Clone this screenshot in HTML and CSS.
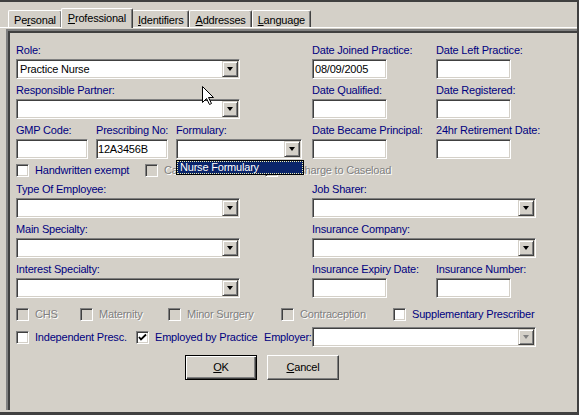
FILE: index.html
```html
<!DOCTYPE html>
<html>
<head>
<meta charset="utf-8">
<link rel="stylesheet" href="styles.css">
</head>
<body>
<div class="window">
  <div class="tabs">
    <div class="tab">Pe<u>r</u>sonal</div>
    <div class="tab selected"><u>P</u>rofessional</div>
    <div class="tab"><u>I</u>dentifiers</div>
    <div class="tab"><u>A</u>ddresses</div>
    <div class="tab"><u>L</u>anguage</div>
  </div>
  <div class="panel">
    <div class="sheet">
      <div class="row">
        <div class="col-left">
          <div class="field w224"><div class="label">Role:</div><div class="combo"><span class="value">Practice Nurse</span><span class="drop"><span class="arrow"></span></span></div></div>
        </div>
        <div class="col-right">
          <div class="field w75"><div class="label">Date Joined Practice:</div><div class="edit">08/09/2005</div></div>
          <div class="field w75"><div class="label">Date Left Practice:</div><div class="edit"></div></div>
        </div>
      </div>
      <div class="row">
        <div class="col-left">
          <div class="field w224"><div class="label">Responsible Partner:</div><div class="combo"><span class="value"></span><span class="drop"><span class="arrow"></span></span></div></div>
        </div>
        <div class="col-right">
          <div class="field w75"><div class="label">Date Qualified:</div><div class="edit"></div></div>
          <div class="field w75"><div class="label">Date Registered:</div><div class="edit"></div></div>
        </div>
      </div>
      <div class="row">
        <div class="col-left">
          <div class="field w72"><div class="label">GMP Code:</div><div class="edit"></div></div>
          <div class="field w72"><div class="label">Prescribing No:</div><div class="edit tight">12A3456B</div></div>
          <div class="field w126 formulary"><div class="label">Formulary:</div><div class="combo"><span class="value"></span><span class="drop"><span class="arrow"></span></span></div>
            <div class="list"><div class="opt">Nurse Formulary</div></div>
          </div>
        </div>
        <div class="col-right">
          <div class="field w75"><div class="label">Date Became Principal:</div><div class="edit"></div></div>
          <div class="field w75"><div class="label">24hr Retirement Date:</div><div class="edit"></div></div>
        </div>
      </div>
      <div class="checkrow">
        <label class="check"><span class="box"></span><span class="text">Handwritten exempt</span></label>
        <label class="check disabled"><span class="box"></span><span class="text">Caseload Holder</span></label>
        <label class="check disabled"><span class="box"></span><span class="text">Discharge to Caseload</span></label>
      </div>
      <div class="row">
        <div class="col-left">
          <div class="field w224"><div class="label">Type Of Employee:</div><div class="combo"><span class="value"></span><span class="drop"><span class="arrow"></span></span></div></div>
        </div>
        <div class="col-right">
          <div class="field w224"><div class="label">Job Sharer:</div><div class="combo"><span class="value"></span><span class="drop"><span class="arrow"></span></span></div></div>
        </div>
      </div>
      <div class="row">
        <div class="col-left">
          <div class="field w224"><div class="label">Main Specialty:</div><div class="combo"><span class="value"></span><span class="drop"><span class="arrow"></span></span></div></div>
        </div>
        <div class="col-right">
          <div class="field w224"><div class="label">Insurance Company:</div><div class="combo"><span class="value"></span><span class="drop"><span class="arrow"></span></span></div></div>
        </div>
      </div>
      <div class="row">
        <div class="col-left">
          <div class="field w224"><div class="label">Interest Specialty:</div><div class="combo"><span class="value"></span><span class="drop"><span class="arrow"></span></span></div></div>
        </div>
        <div class="col-right">
          <div class="field w75"><div class="label">Insurance Expiry Date:</div><div class="edit"></div></div>
          <div class="field w75"><div class="label">Insurance Number:</div><div class="edit"></div></div>
        </div>
      </div>
      <div class="opts">
        <label class="check disabled"><span class="box"></span><span class="text">CHS</span></label>
        <label class="check disabled"><span class="box"></span><span class="text">Maternity</span></label>
        <label class="check disabled"><span class="box"></span><span class="text">Minor Surgery</span></label>
        <label class="check disabled"><span class="box"></span><span class="text">Contraception</span></label>
        <label class="check"><span class="box"></span><span class="text">Supplementary Prescriber</span></label>
      </div>
      <div class="emprow">
        <label class="check"><span class="box"></span><span class="text">Independent Presc.</span></label>
        <label class="check"><span class="box"><svg width="9" height="9" viewBox="0 0 9 9"><path d="M1 4 L3 6.5 L8 1.5" fill="none" stroke="#000" stroke-width="1.8"/></svg></span><span class="text">Employed by Practice</span></label>
        <span class="emp-label">Employer:</span>
        <div class="combo w224"><span class="value"></span><span class="drop"><span class="arrow off"></span></span></div>
      </div>
      <div class="buttons">
        <div class="btn default"><u>O</u>K</div>
        <div class="btn"><u>C</u>ancel</div>
      </div>
    </div>
  </div>
  <svg class="cursor" width="13" height="20" viewBox="0 0 13 20"><path d="M0.5 0.5 L0.5 16.5 L4.5 12.5 L7.5 18.5 L9.5 17.5 L6.5 11.5 L11.5 11.5 Z" fill="#fff" stroke="#000" stroke-width="1"/></svg>
</div>
</body>
</html>
```

FILE: styles.css
```css
* { box-sizing: border-box; }
html, body { margin: 0; padding: 0; }
body {
  width: 579px;
  height: 415px;
  overflow: hidden;
  background: #d4d0c8;
  font-family: "Liberation Sans", Arial, sans-serif;
  font-size: 11px;
  letter-spacing: -0.2px;
  color: #000;
}
.window {
  position: relative;
  height: 415px;
  border-top: 2px solid #404040;
  border-right: 2px solid #404040;
  border-bottom: 3px solid #404040;
}
.tabs {
  display: flex;
  align-items: flex-end;
  height: 25px;
  padding-left: 8px;
}
.tab {
  height: 17px;
  padding: 2px 5px 0 5px;
  line-height: 14px;
  border: 1px solid;
  border-color: #fff #404040 transparent #fff;
  border-bottom: none;
  box-shadow: inset -1px 0 #808080;
  border-radius: 2px 2px 0 0;
  white-space: nowrap;
  background: #d4d0c8;
}
.tab.selected {
  position: relative;
  z-index: 2;
  height: 20px;
  margin: 0 -1px -1px -1px;
  padding: 2px 6px 0 6px;
}
.panel {
  border-top: 1px solid #fff;
  padding: 1px 0 0 6px;
}
.sheet {
  border-top: 2px solid #808080;
  border-left: 2px solid #808080;
  box-shadow: inset 2px 2px 0 #404040;
  padding: 12px 0 0 8px;
  height: 381px;
}
.row { display: flex; gap: 9px; }
.row + .row { margin-top: 4px; }
.col-left { width: 287px; display: flex; gap: 8px; }
.col-right { width: 224px; display: flex; gap: 49px; }
.field { display: flex; flex-direction: column; min-width: 0; }
.w224 { width: 224px; }
.w75 { width: 75px; }
.w72 { width: 72px; }
.w126 { width: 126px; }
.label {
  color: #000080;
  height: 14px;
  line-height: 14px;
  margin-bottom: 2px;
  white-space: nowrap;
}
.edit {
  height: 20px;
  background: #fff;
  border: 1px solid;
  border-color: #808080 #fff #fff #808080;
  box-shadow: inset 1px 1px #404040, inset -1px -1px #d4d0c8;
  padding: 0 2px;
  line-height: 18px;
  white-space: nowrap;
}
.edit.tight { padding: 0 1px; }
.combo {
  display: flex;
  height: 20px;
  background: #fff;
  border: 1px solid;
  border-color: #808080 #fff #fff #808080;
  box-shadow: inset 1px 1px #404040, inset -1px -1px #d4d0c8;
  padding: 1px;
}
.combo .value {
  flex: 1;
  padding-left: 2px;
  line-height: 16px;
  white-space: nowrap;
}
.drop {
  width: 16px;
  height: 16px;
  background: #d4d0c8;
  border: 1px solid;
  border-color: #d4d0c8 #404040 #404040 #d4d0c8;
  box-shadow: inset 1px 1px #fff, inset -1px -1px #808080;
  display: flex;
  align-items: center;
  justify-content: center;
}
.arrow {
  width: 1px;
  height: 0;
  border-top: 4px solid #000;
  border-left: 3px solid transparent;
  border-right: 3px solid transparent;
}
.arrow.off { border-top-color: #808080; }
.formulary { position: relative; }
.list {
  position: absolute;
  z-index: 5;
  top: 37px;
  left: 0;
  width: 128px;
  height: 15px;
  border: 1px solid #000;
  background: #0a246a;
  padding: 1px;
}
.opt {
  height: 11px;
  outline: 1px dotted #f0f0b0;
  outline-offset: 0;
  color: #fff;
  line-height: 11px;
  padding-left: 2px;
  white-space: nowrap;
}
.check {
  display: flex;
  align-items: center;
  gap: 6px;
  color: #000080;
  white-space: nowrap;
}
.check .text { line-height: 13px; }
.box {
  width: 13px;
  height: 13px;
  flex: none;
  background: #fff;
  border: 1px solid;
  border-color: #808080 #fff #fff #808080;
  box-shadow: inset 1px 1px #404040, inset -1px -1px #d4d0c8;
  display: flex;
  align-items: center;
  justify-content: center;
}
.box svg { display: block; }
.check.disabled { color: #808080; }
.check.disabled .text { text-shadow: 1px 1px 0 #fff; }
.check.disabled .box { background: #d4d0c8; }
.checkrow {
  display: grid;
  grid-template-columns: 129px 120px auto;
  height: 13px;
  margin: 5px 0;
}
.opts {
  display: grid;
  grid-template-columns: 64px 88px 113px 112px auto;
  height: 13px;
  margin-top: 10px;
}
.emprow {
  display: grid;
  grid-template-columns: 120px 128px 48px 224px;
  align-items: center;
  height: 20px;
  margin-top: 6px;
}
.emp-label { color: #000080; white-space: nowrap; }
.buttons {
  display: flex;
  gap: 10px;
  margin-top: 8px;
  padding-left: 169px;
}
.btn {
  width: 72px;
  height: 25px;
  background: #d4d0c8;
  border: 1px solid;
  border-color: #fff #404040 #404040 #fff;
  box-shadow: inset -1px -1px #808080;
  text-align: center;
  line-height: 22px;
}
.btn.default {
  border: 1px solid #000;
  box-shadow: inset 1px 1px #fff, inset -1px -1px #404040, inset -2px -2px #808080;
}
.cursor {
  position: absolute;
  left: 202px;
  top: 84px;
}
```
